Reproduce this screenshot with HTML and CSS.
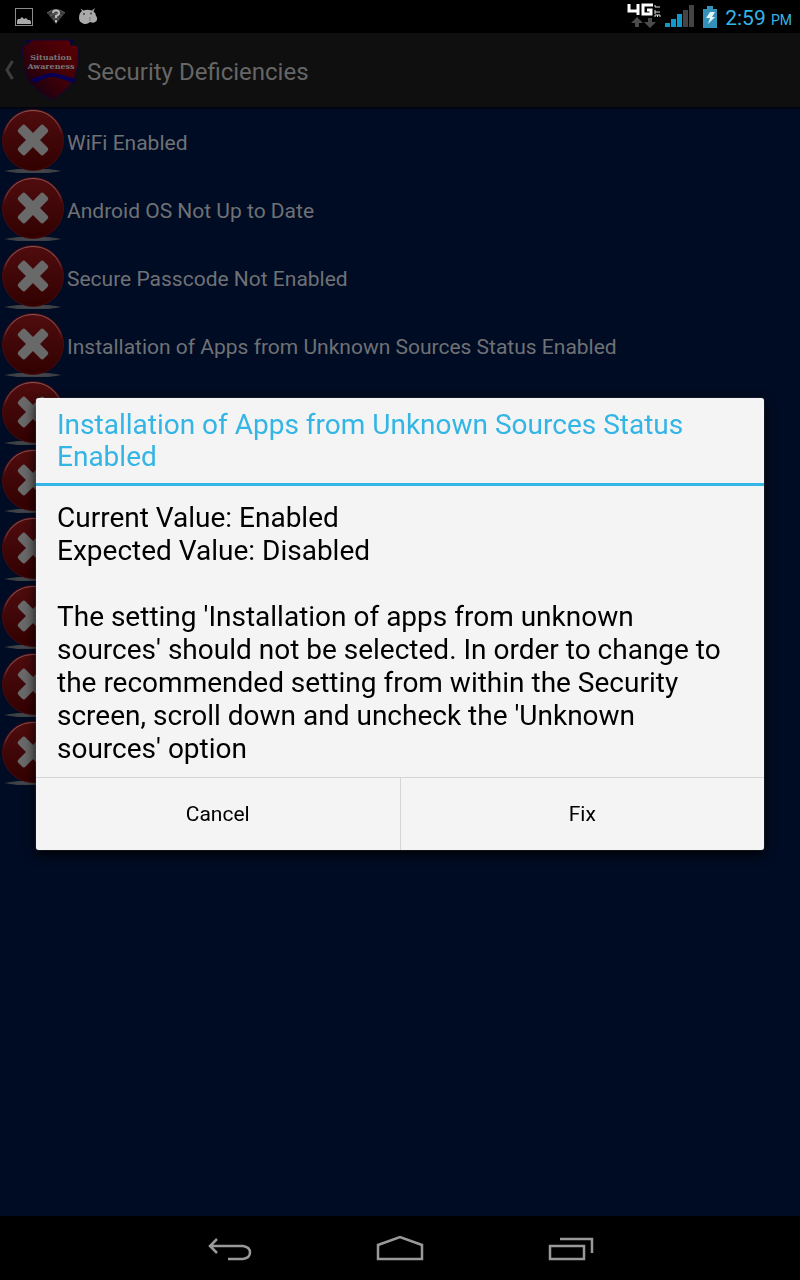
FILE: index.html
```
<!DOCTYPE html>
<html lang="en">
<head>
  <meta charset="UTF-8">
  <meta name="viewport" content="width=device-width, initial-scale=1.0">
  <title>Security Deficiencies</title>
  <link rel="stylesheet" href="styles.css">
</head>
<body>

<!-- shared icon for the list rows -->
<svg class="defs" width="0" height="0" aria-hidden="true">
  <defs>
    <linearGradient id="red" x1="0" y1="0" x2="0" y2="1">
      <stop offset="0" stop-color="#500c0e"/>
      <stop offset="0.5" stop-color="#400708"/>
      <stop offset="1" stop-color="#320000"/>
    </linearGradient>
    <linearGradient id="shine" x1="0" y1="0" x2="0" y2="1">
      <stop offset="0" stop-color="#8a5558"/>
      <stop offset="0.7" stop-color="#6b3034"/>
      <stop offset="1" stop-color="#6b3034" stop-opacity="0"/>
    </linearGradient>
    <radialGradient id="shade">
      <stop offset="0" stop-color="#4a4d50"/>
      <stop offset="0.8" stop-color="#3a3e43"/>
      <stop offset="1" stop-color="#20262f" stop-opacity="0"/>
    </radialGradient>
    <symbol id="cross" viewBox="0 0 66 68">
      <ellipse cx="33" cy="64" rx="30" ry="2.5" fill="url(#shade)"/>
      <circle cx="33" cy="33" r="30.5" fill="url(#red)" stroke="#480b0e"/>
      <path d="M4 28C7 13 19 3.500 33 3.500S59 13 62 28" fill="none" stroke="url(#shine)" stroke-width="1.200"/>
      <g fill="#696969" transform="rotate(45 33 33)">
        <rect x="15" y="28" width="36" height="10" rx="2.5"/>
        <rect x="28" y="15" width="10" height="36" rx="2.5"/>
      </g>
    </symbol>
  </defs>
</svg>

<div class="screen">
  <header class="status-bar">
    <div class="notifications">
      <svg width="20" height="20" viewBox="0 0 20 20" aria-hidden="true">
        <rect x="1.500" y="1.500" width="17" height="17" fill="none" stroke="#8c8c8c"/>
        <path d="M3 17V14L4 12L6 12L8 10L10 12L12 11L14 13H16L17 15V17Z" fill="#aaa"/>
      </svg>
      <svg width="20" height="20" viewBox="0 0 20 20" aria-hidden="true">
        <path d="M1 6Q10-1 19 6L10 17Z" fill="#3c3c3c"/>
        <path d="M1 6Q10-1 19 6M4 9Q10 4 16 9M7 12Q10 9 13 12" fill="none" stroke="#666"/>
        <path d="M7 6Q7 3.500 10 3.500T13 6Q13 8 10 9V11M10 13V15.500" fill="none" stroke="#bbb" stroke-width="2"/>
      </svg>
      <svg width="20" height="20" viewBox="0 0 20 20" aria-hidden="true">
        <path d="M4 4L2.500 1.500L5.500 3.500Q9 2 14 3.500L17 1L15.500 4.500Q18 6 18 9Q20 11 18.500 14Q16 17 12 15Q9 18 5 16.500Q1 15 1 11Q1 6 4 4Z" fill="#aaa"/>
        <circle cx="6" cy="7" r="1" fill="#444"/><circle cx="13" cy="6.500" r="1" fill="#444"/>
        <path d="M12 10V14" stroke="#777"/>
      </svg>
    </div>
    <div class="system">
      <svg width="34" height="28" viewBox="0 0 34 28" role="img" aria-label="4G LTE">
        <path d="M2 1V8H12M11 1V12M26 2H16V11H24V7H20" fill="none" stroke="#fff" stroke-width="3"/>
        <path d="M28 2V4H33M28 9H33M28 7V11M28 14V12H33V14M30.500 12V14" fill="none" stroke="#ddd" stroke-width="1"/>
        <path d="M10 14L16 20H12V24H8V20H4ZM23 25L29 19H25V15H21V19H17Z" fill="#4c4c4c"/>
      </svg>
      <svg width="30" height="24" viewBox="0 0 30 24" aria-hidden="true">
        <path d="M0 18H5V22H0ZM6 14H11V22H6ZM12 9H17V22H12Z" fill="#0d99cc"/>
        <path d="M18 5H23V22H18ZM24 0H29V22H24Z" fill="#444"/>
      </svg>
      <svg width="14" height="22" viewBox="0 0 14 22" aria-hidden="true">
        <path d="M0 3H4V0H10V3H14V22H0Z" fill="#3491b9"/>
        <path d="M7 6H12L9 11H12L5 18L7 12H3Z" fill="#e3f3fa"/>
      </svg>
      <time class="clock">2:59 <small>PM</small></time>
    </div>
  </header>

  <div class="action-bar">
    <button class="up" aria-label="Navigate up">
      <svg width="12" height="20" viewBox="0 0 12 20" aria-hidden="true">
        <path d="M9.500 1L4 10L9.500 19" fill="none" stroke="#3e3e3e" stroke-width="3"/>
      </svg>
      <svg width="58" height="64" viewBox="0 0 58 64" aria-hidden="true">
        <defs>
          <linearGradient id="shield" x1="1" y1="0" x2="0" y2="1">
            <stop offset="0" stop-color="#5a0003"/>
            <stop offset="0.5" stop-color="#3d0008"/>
            <stop offset="1" stop-color="#060214"/>
          </linearGradient>
        </defs>
        <path d="M5 3H53M8 6H51" stroke="#090045" stroke-width="2"/>
        <path d="M10 2H48L50 7L57 8V25Q54 50 31 62Q7 49 3 32L1 8L8 6Z" fill="url(#shield)" stroke="#0c0944" stroke-width="0.800"/>
        <path d="M10 41L28 35H34L55 41L53 45L34 39H28L13 45Z" fill="#080052"/>
        <g class="shield-text">
          <text x="30" y="22">Situation</text>
          <text x="30" y="31">Awareness</text>
        </g>
      </svg>
    </button>
    <h1>Security Deficiencies</h1>
  </div>

  <main>
    <ul class="deficiencies">
      <li><svg class="cross"><use href="#cross"/></svg><span>WiFi Enabled</span></li>
      <li><svg class="cross"><use href="#cross"/></svg><span>Android OS Not Up to Date</span></li>
      <li><svg class="cross"><use href="#cross"/></svg><span>Secure Passcode Not Enabled</span></li>
      <li><svg class="cross"><use href="#cross"/></svg><span>Installation of Apps from Unknown Sources Status Enabled</span></li>
      <li><svg class="cross"><use href="#cross"/></svg></li>
      <li><svg class="cross"><use href="#cross"/></svg></li>
      <li><svg class="cross"><use href="#cross"/></svg></li>
      <li><svg class="cross"><use href="#cross"/></svg></li>
      <li><svg class="cross"><use href="#cross"/></svg></li>
      <li><svg class="cross"><use href="#cross"/></svg></li>
    </ul>
  </main>

  <nav class="nav-bar">
    <button aria-label="Back">
      <svg width="48" height="32" viewBox="0 0 48 32" aria-hidden="true">
        <path d="M11 5L4 12L11 19M4 12H37Q44 13 44 18.500T37 25H22" fill="none" stroke="#999" stroke-width="2.500"/>
      </svg>
    </button>
    <button aria-label="Home">
      <svg width="48" height="32" viewBox="0 0 48 32" aria-hidden="true">
        <path d="M2 25V11L24 3L46 11V25Z" fill="none" stroke="#999" stroke-width="2.500"/>
      </svg>
    </button>
    <button aria-label="Recent apps">
      <svg width="48" height="32" viewBox="0 0 48 32" aria-hidden="true">
        <path d="M4 12H38V25H4ZM14 5H46V19" fill="none" stroke="#999" stroke-width="2.500"/>
      </svg>
    </button>
  </nav>
</div>

<div class="overlay">
  <div class="dialog" role="dialog" aria-modal="true" aria-labelledby="dialog-title">
    <h2 id="dialog-title">Installation of Apps from Unknown Sources Status Enabled</h2>
    <div class="message">
      <p>Current Value: Enabled<br>Expected Value: Disabled</p>
      <p>The setting 'Installation of apps from unknown sources' should not be selected. In order to change to the recommended setting from within the Security screen, scroll down and uncheck the 'Unknown sources' option</p>
    </div>
    <div class="buttons">
      <button>Cancel</button>
      <button>Fix</button>
    </div>
  </div>
</div>

</body>
</html>
```

FILE: styles.css
```
* { box-sizing: border-box; }

body {
  margin: 0;
  background: #000c24;
  color: #6f7174;
  font-family: Roboto, "Noto Sans", sans-serif;
}

h1, h2, p, ul {
  margin: 0;
  padding: 0;
  font-weight: 400;
}

button {
  padding: 0;
  border: none;
  background: none;
  color: inherit;
  font: inherit;
  cursor: pointer;
}

svg { display: block; flex-shrink: 0; }

.defs { position: absolute; }

.screen {
  display: flex;
  flex-direction: column;
  min-height: 100vh;
}

/* status bar */
.status-bar {
  display: flex;
  justify-content: space-between;
  height: 33px;
  padding: 0 8px 0 14px;
  background: #000;
}

.notifications,
.system {
  display: flex;
  align-items: center;
}

.notifications { gap: 12px; }
.system { gap: 8px; }

.system svg:first-child { margin-right: -4px; }

.clock {
  padding-top: 4px;
  color: #33b5e5;
  font-size: 21px;
  line-height: 30px;
}

.clock small { font-size: 14px; }

/* action bar */
.action-bar {
  display: flex;
  align-items: center;
  gap: 8px;
  height: 74px;
  padding-left: 3px;
  background: #0f0f0f;
  box-shadow: 0 1px 3px #000;
}

.up {
  display: flex;
  align-items: center;
  gap: 6px;
}

.shield-text {
  fill: #777;
  font: bold 8px "DejaVu Serif", serif;
  text-anchor: middle;
}

h1 {
  padding-top: 4px;
  color: #666;
  font-size: 24px;
  line-height: 32px;
}

/* list */
main { flex: 1; }

.deficiencies { list-style: none; }

.deficiencies li {
  display: flex;
  align-items: center;
  gap: 1px;
  height: 68px;
  font-size: 21px;
}

.deficiencies span { padding-top: 4px; }

.cross {
  width: 66px;
  height: 68px;
}

/* bottom navigation */
.nav-bar {
  display: flex;
  justify-content: center;
  align-items: center;
  gap: 122px;
  height: 64px;
  padding-top: 4px;
  background: #000;
}

/* dialog */
.overlay {
  position: fixed;
  inset: 32px 0 64px;
  display: flex;
  justify-content: center;
  align-items: center;
  padding: 0 36px;
}

.dialog {
  width: 100%;
  border-radius: 3px;
  background: #f4f4f4;
  box-shadow: 0 0 1px #aaa, 0 4px 12px #000;
  color: #000;
  overflow: hidden;
}

h2 {
  padding: 11px 21px 10px;
  border-bottom: 3px solid #33b5e5;
  color: #33b5e5;
  font-size: 28px;
  line-height: 32px;
}

.message {
  padding: 15px 21px 12px;
  font-size: 28px;
  line-height: 33px;
}

.message p + p { margin-top: 33px; }

.buttons {
  display: flex;
  border-top: 1px solid #d5d5d5;
}

.buttons button {
  flex: 1;
  height: 72px;
  font-size: 21px;
}

.buttons button + button { border-left: 1px solid #d5d5d5; }
```
